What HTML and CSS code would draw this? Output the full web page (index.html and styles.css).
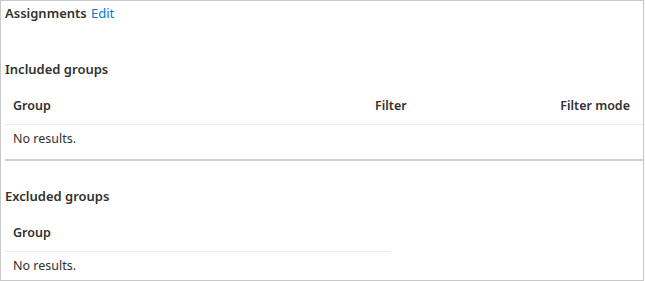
FILE: index.html
```html
<!DOCTYPE html>
<html>
<head>
<meta charset="utf-8">
<link rel="stylesheet" href="styles.css">
</head>
<body>
<div class="panel">
  <div class="title"><span class="title-text">Assignments</span> <a class="edit">Edit</a></div>
  <h2 class="section">Included groups</h2>
  <div class="table table-inc">
    <div class="row head">
      <div class="cell">Group</div>
      <div class="cell">Filter</div>
      <div class="cell right">Filter mode</div>
    </div>
    <div class="row body">
      <div class="cell">No results.</div>
    </div>
  </div>
  <div class="separator"></div>
  <h2 class="section section-exc">Excluded groups</h2>
  <div class="table table-exc">
    <div class="row head">
      <div class="cell">Group</div>
    </div>
    <div class="row body">
      <div class="cell">No results.</div>
    </div>
  </div>
</div>
</body>
</html>
```
FILE: styles.css
```css
html, body {
  margin: 0;
  padding: 0;
  background: #ffffff;
}
body {
  font-family: "Segoe UI", "Noto Sans", "Open Sans", sans-serif;
  font-size: 12.5px;
  color: #323130;
}
.panel {
  box-sizing: border-box;
  width: 644px;
  height: 281px;
  border: 1px solid #c8c8c8;
  padding-left: 4px;
}
.title {
  height: 24px;
  line-height: 24px;
}
.title-text {
  font-weight: 600;
  font-size: 13px;
}
.edit {
  color: #0078d4;
  font-size: 13px;
  margin-left: 1px;
}
.section {
  margin: 34px 0 0 0;
  font-size: 13px;
  font-weight: 600;
  line-height: 20px;
  height: 20px;
}
.section-exc {
  margin-top: 25px;
}
.table {
  margin-top: 9px;
}
.table-exc {
  width: 385px;
}
.row {
  display: grid;
  grid-template-columns: 362px 1fr auto;
}
.head {
  height: 36px;
  line-height: 36px;
  border-bottom: 1px solid #edebe9;
  font-weight: 600;
}
.body {
  height: 28px;
  line-height: 28px;
}
.cell {
  padding-left: 8px;
  white-space: nowrap;
}
.right {
  padding-left: 0;
  padding-right: 13px;
  text-align: right;
}
.separator {
  margin-top: 6px;
  height: 2px;
  background: #d2d0ce;
}
```
